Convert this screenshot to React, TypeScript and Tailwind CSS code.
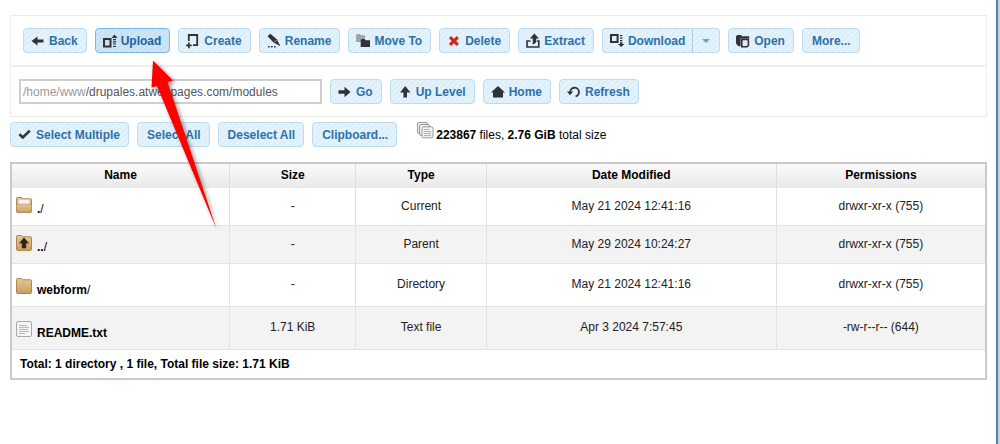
import type { ReactNode } from "react";
import { clsx } from "clsx";

const DARK = "#2f3337";

function Icon({ children }: { children: ReactNode }) {
  return (
    <svg
      aria-hidden
      viewBox="0 0 16 16"
      fill={DARK}
      className="size-4 shrink-0"
    >
      {children}
    </svg>
  );
}

const BackIcon = () => (
  <Icon>
    <path d="M.5 8 6.5 3.5v3h6v3h-6v3z" />
  </Icon>
);

const UploadIcon = () => (
  <Icon>
    <path d="M1 6h6.5v7.5H1z" fill="none" stroke={DARK} strokeWidth="2" />
    <path d="M11.5 1.5 14.5 5h-6zM10 6h3v1.2h-3zM10 8.2h3v1.2h-3zM10 10.6h3v1h-3zM10 13h3v1h-3z" />
  </Icon>
);

const CreateIcon = () => (
  <Icon>
    <path
      d="M2.8 8V2h8.4v10.2H7"
      fill="none"
      stroke={DARK}
      strokeWidth="1.8"
    />
    <path d="M2 9.5h1.7v2h2v1.7h-2v2H2v-2H0v-1.7h2z" />
  </Icon>
);

const RenameIcon = () => (
  <Icon>
    <path d="M.5 3.2 3.4.8 10 6.6l3.4 6.6-6.8-3.6z" />
    <path d="m9.4 7.2-2 2" stroke="#dcecf8" strokeWidth=".8" />
    <path d="M1 13h1.6v1.6H1zM4 13h1.6v1.6H4zM7 13h1.6v1.6H7z" />
  </Icon>
);

const MoveIcon = () => (
  <Icon>
    <path d="M0 2.2 1 1h3l1 1.2h4V9H0z" fill="#a0a6ab" />
    <path d="M4.7 7.2 5.7 6h3l1 1.2H14V14H4.7z" />
  </Icon>
);

const DeleteIcon = () => (
  <Icon>
    <path
      d="m3 4.2 7.8 7.6M10.8 4.2 3 11.8"
      stroke="#d4261c"
      strokeWidth="3.2"
    />
  </Icon>
);

const ExtractIcon = () => (
  <Icon>
    <path
      d="M4.5 8H1v6h11.8V8H11"
      fill="none"
      stroke={DARK}
      strokeWidth="1.6"
    />
    <path d="M8.4.6 13 5.6h-2.7v2.8c0 1.6-2 2.8-4.3 2.8.7-.7.8-1.5.8-2.8V5.6H3.8z" />
  </Icon>
);

const DownloadIcon = () => (
  <Icon>
    <path d="M1 2h6.6v7H1z" fill="none" stroke={DARK} strokeWidth="2" />
    <path d="M10 2h2.4v1.2H10zM10 4.5h2.4v1.2H10zM10 7h2.4v1.2H10zM10 9.3h2.4V11h2.1l-3.3 3-3.3-3H10z" />
  </Icon>
);

const OpenIcon = () => (
  <Icon>
    <path d="M0 3.5 1.2 2H5l1 1.2h7.2v2.4H0zM0 5h4.6v8.2H2.4L0 10.6z" />
    <path
      d="M5.8 6.4h6.6v6L11 13.8H5.8z"
      fill="#e4edf4"
      stroke={DARK}
      strokeWidth="1.6"
    />
  </Icon>
);

const GoIcon = () => (
  <Icon>
    <path d="M12.5 8 6.5 2.8v3.4h-6v3.6h6v3.4z" />
  </Icon>
);

const UpIcon = () => (
  <Icon>
    <path d="M7.2 2 12.5 8.4H9v5.2H5.4V8.4H2z" />
  </Icon>
);

const HomeIcon = () => (
  <Icon>
    <path d="M7 2 14 8.4h-2v5H2v-5H0z" />
  </Icon>
);

const RefreshIcon = () => (
  <Icon>
    <path
      d="M3.2 8.2A4.4 4.4 0 1 1 8.6 12.4"
      fill="none"
      stroke={DARK}
      strokeWidth="1.8"
    />
    <path d="M0 7.6h6.2L3 11.2z" />
  </Icon>
);

const CheckIcon = () => (
  <Icon>
    <path
      d="m1.4 7.2 3.4 3.2 7-6.8"
      fill="none"
      stroke={DARK}
      strokeWidth="2.6"
    />
  </Icon>
);

function StackIcon() {
  return (
    <svg aria-hidden viewBox="0 0 17 17" className="size-[17px] shrink-0">
      <g fill="#f1f1f1" stroke="#8f8f8f" strokeWidth=".9">
        <rect x=".5" y=".5" width="10" height="11" rx="1.5" />
        <rect x="2.5" y="2.5" width="10" height="11" rx="1.5" />
        <rect x="5" y="4.8" width="11" height="11" rx="1.5" />
      </g>
      <path
        d="M7 7.5h5M7 9.5h7M7 11.5h7M7 13.5h7"
        stroke="#adadad"
        strokeWidth=".9"
      />
    </svg>
  );
}

type EntryKind = "open" | "up" | "folder" | "text";

function EntryIcon({ kind }: { kind: EntryKind }) {
  if (kind === "text") {
    return (
      <svg aria-hidden viewBox="0 0 16 16" className="size-4 shrink-0">
        <rect
          x=".5"
          y=".5"
          width="15"
          height="15"
          rx="1.5"
          fill="#f4f4f4"
          stroke="#a9a9a9"
        />
        <path
          d="M3 4.5h8M3 6.5h10M3 8.5h9M3 10.5h10M3 12.5h6"
          stroke="#b9b9b9"
          strokeWidth="1"
        />
      </svg>
    );
  }

  return (
    <svg aria-hidden viewBox="0 0 16 16" className="size-4 shrink-0">
      <defs>
        <linearGradient id={`fold-${kind}`} x1="0" y1="0" x2="0" y2="1">
          <stop offset="0" stopColor="#e6c894" />
          <stop offset="1" stopColor="#c89e60" />
        </linearGradient>
      </defs>
      <path
        d="M.5 3V1.4Q.5.5 1.4.5h4.2l1 1.3h7.800q1.100 0 1.100 1V14.200q0 1.300-1.300 1.300H1.800Q.5 15.500.5 14.200z"
        fill={`url(#fold-${kind})`}
        stroke="#a67e49"
        strokeWidth=".9"
      />
      {kind === "open" && (
        <>
          <path
            d="M2.3 2.4h11.4V9H2.3z"
            fill="#f2f3f6"
            stroke="#c3bdb2"
            strokeWidth=".6"
          />
          <path
            d="M.5 8q0-.8.900-.8h13.200q.900 0 .900.800v6.200q0 1.300-1.300 1.300H1.800Q.5 15.500.5 14.200z"
            fill="url(#fold-open)"
            stroke="#b18a54"
            strokeWidth=".6"
          />
        </>
      )}
      {kind === "up" && (
        <path d="M8 2.4 13 8.2h-2.8v5H5.800v-5H3z" fill="#33271a" />
      )}
    </svg>
  );
}

const BUTTON =
  "flex h-[25px] items-center gap-[2px] rounded-[4px] border text-[12px] leading-4 font-bold whitespace-nowrap";
const BUTTON_IDLE =
  "border-[#bcdaf0] bg-[repeating-linear-gradient(135deg,#dceefa_0_2px,#e5f3fc_2px_4px)] text-[#2d72a8]";
const BUTTON_ACTIVE =
  "border-[#79b7e7] bg-[repeating-linear-gradient(135deg,#c5e0f4_0_2px,#d0e6f7_2px_4px)] text-[#1d64a0]";

type ToolButtonProps = {
  label: string;
  icon?: ReactNode;
  active?: boolean;
};

function ToolButton({ label, icon, active }: ToolButtonProps) {
  return (
    <button
      type="button"
      className={clsx(
        BUTTON,
        active ? BUTTON_ACTIVE : BUTTON_IDLE,
        icon ? "pr-2 pl-[7px]" : "pr-2 pl-[9px]",
      )}
    >
      {icon}
      {label}
    </button>
  );
}

function DownloadButton() {
  return (
    <div className="flex">
      <button
        type="button"
        className={clsx(
          BUTTON,
          BUTTON_IDLE,
          "rounded-r-none border-r-0 pr-[7px] pl-[7px]",
        )}
      >
        <DownloadIcon />
        Download
      </button>
      <button
        type="button"
        aria-label="Download options"
        className={clsx(
          BUTTON,
          BUTTON_IDLE,
          "w-7 justify-center rounded-l-none border-l-[#a9cfea]",
        )}
      >
        <svg aria-hidden viewBox="0 0 8 4" className="h-1 w-2">
          <path d="M0 0h8L4 4z" fill="#62a5d8" />
        </svg>
      </button>
    </div>
  );
}

type Entry = {
  name: string;
  slash?: boolean;
  kind: EntryKind;
  size: string;
  type: string;
  modified: string;
  permissions: string;
  tall?: boolean;
};

const ENTRIES: Entry[] = [
  { name: ".", slash: true, kind: "open", size: "-", type: "Current", modified: "May 21 2024 12:41:16", permissions: "drwxr-xr-x (755)" },
  { name: "..", slash: true, kind: "up", size: "-", type: "Parent", modified: "May 29 2024 10:24:27", permissions: "drwxr-xr-x (755)" },
  { name: "webform", slash: true, kind: "folder", size: "-", type: "Directory", modified: "May 21 2024 12:41:16", permissions: "drwxr-xr-x (755)", tall: true },
  { name: "README.txt", kind: "text", size: "1.71 KiB", type: "Text file", modified: "Apr 3 2024 7:57:45", permissions: "-rw-r--r-- (644)", tall: true },
];

const COLUMNS = [
  { label: "Name", width: "w-[22.4%]" },
  { label: "Size", width: "w-[13%]" },
  { label: "Type", width: "w-[13.4%]" },
  { label: "Date Modified", width: "w-[29.8%]" },
  { label: "Permissions", width: "w-[21.4%]" },
];

function FileTable() {
  return (
    <table className="w-full table-fixed border-separate border-spacing-0 border-2 border-[#cacaca] text-center text-[12px] leading-4 text-[#222]">
      <thead>
        <tr className="h-6 bg-linear-to-b from-[#fafafa] to-[#e9e9e9] text-black">
          {COLUMNS.map((column) => (
            <th
              key={column.label}
              scope="col"
              className={clsx(
                column.width,
                "border-r border-[#dedede] p-0 pb-[2px] last:border-r-0",
              )}
            >
              {column.label}
            </th>
          ))}
        </tr>
      </thead>
      <tbody>
        {ENTRIES.map((entry) => (
          <tr
            key={entry.name}
            className={clsx(
              "even:bg-[#f3f3f3] [&>td]:border-r [&>td]:border-b [&>td]:border-[#e2e2e2] [&>td]:pb-[2px] [&>td:last-child]:border-r-0",
              entry.tall ? "h-[43px]" : "h-[38px]",
            )}
          >
            <td className={clsx("px-1", entry.tall ? "pt-2" : "pt-[2px]")}>
              <div className="flex items-baseline gap-[5px] text-black">
                <EntryIcon kind={entry.kind} />
                <span>
                  <b>{entry.name}</b>
                  {entry.slash && "/"}
                </span>
              </div>
            </td>
            <td>{entry.size}</td>
            <td>{entry.type}</td>
            <td>{entry.modified}</td>
            <td>{entry.permissions}</td>
          </tr>
        ))}
      </tbody>
      <tfoot>
        <tr className="h-7 text-left font-bold text-black">
          <td colSpan={5} className="px-2 py-0">
            Total: 1 directory , 1 file, Total file size: 1.71 KiB
          </td>
        </tr>
      </tfoot>
    </table>
  );
}

export default function App() {
  return (
    <div className="min-h-screen bg-[#d0d0d0] pr-[2px] font-['Liberation_Sans',Arial,sans-serif]">
      <main className="relative min-h-screen border-r-2 border-[#4a84b4] bg-white pt-[15px] pr-[9px] pl-[10px]">
        <section className="border border-[#ececec]">
          {/* file actions */}
          <div className="flex h-[51px] items-center gap-2 border-b-2 border-[#efefef] px-3">
            <ToolButton label="Back" icon={<BackIcon />} />
            <ToolButton label="Upload" icon={<UploadIcon />} active />
            <ToolButton label="Create" icon={<CreateIcon />} />
            <ToolButton label="Rename" icon={<RenameIcon />} />
            <ToolButton label="Move To" icon={<MoveIcon />} />
            <ToolButton label="Delete" icon={<DeleteIcon />} />
            <ToolButton label="Extract" icon={<ExtractIcon />} />
            <DownloadButton />
            <ToolButton label="Open" icon={<OpenIcon />} />
            <ToolButton label="More..." />
          </div>

          {/* path and navigation */}
          <div className="flex h-[49px] items-center gap-2 px-2">
            <div className="flex h-[25px] w-[303px] items-center border-2 border-[#cfcfcf] bg-white pl-[2px] text-[12px] leading-4">
              <label htmlFor="path" className="text-[#999]">
                /home/www
              </label>
              <input
                id="path"
                type="text"
                defaultValue="/drupales.atwebpages.com/modules"
                className="min-w-0 flex-1 p-0 text-[#555] outline-none"
              />
            </div>
            <ToolButton label="Go" icon={<GoIcon />} />
            <ToolButton label="Up Level" icon={<UpIcon />} />
            <ToolButton label="Home" icon={<HomeIcon />} />
            <ToolButton label="Refresh" icon={<RefreshIcon />} />
          </div>
        </section>

        {/* selection */}
        <div className="flex items-center gap-2 pt-[5px] pb-[15px]">
          <ToolButton label="Select Multiple" icon={<CheckIcon />} />
          <ToolButton label="Select All" />
          <ToolButton label="Deselect All" />
          <ToolButton label="Clipboard..." />
          <p className="flex items-baseline gap-[2px] pb-1 pl-3 text-[12px] leading-4 text-black">
            <StackIcon />
            <span>
              <b>223867</b> files, <b>2.76 GiB</b> total size
            </span>
          </p>
        </div>

        <FileTable />

        {/* arrow pointing at Upload */}
        <svg
          aria-hidden
          viewBox="0 0 80 180"
          className="pointer-events-none absolute top-[55px] left-[145px] h-[180px] w-20 drop-shadow-[2px_2px_2px_rgba(0,0,0,0.45)]"
        >
          <path d="M8 5.5 28 25.5 22.5 27 71.5 174 12 31 6.5 32.5z" fill="#fe0000" />
        </svg>
      </main>
    </div>
  );
}
